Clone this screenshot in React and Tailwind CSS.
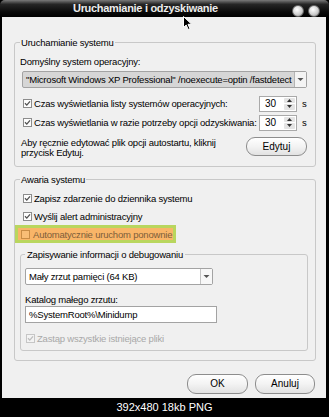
import React from "react";

function Check({ checked = true, disabled = false }) {
  return (
    <svg width="9" height="9" viewBox="0 0 9 9" className="shrink-0">
      <rect
        x="0.5"
        y="0.5"
        width="8"
        height="8"
        fill={disabled ? "#f3f3f3" : "#fdfdfd"}
        stroke={disabled ? "#c6c6c6" : "#8c8c8c"}
      />
      {checked && (
        <path
          d="M2 4.3 L3.8 6.1 L7 2.3"
          fill="none"
          stroke={disabled ? "#bdbdbd" : "#505050"}
          strokeWidth="1.3"
        />
      )}
    </svg>
  );
}

function Arrow() {
  return (
    <svg width="7" height="5" viewBox="0 0 7 5">
      <path d="M0.5 1 L6.5 1 L3.5 4 Z" fill="#555" />
    </svg>
  );
}

function Spin() {
  return (
    <div className="flex h-[16px] w-[38px] border border-[#a9a9a9] bg-white">
      <span className="flex-1 pl-[5px] text-[10px] leading-[14px] tracking-normal">30</span>
      <div className="flex w-[13px] flex-col gap-[1px] p-[1px]">
        <div className="flex flex-1 items-center justify-center rounded-[1px] bg-[#e4e4e4]">
          <svg width="5" height="3" viewBox="0 0 5 3">
            <path d="M0 3 L5 3 L2.5 0 Z" fill="#333" />
          </svg>
        </div>
        <div className="flex flex-1 items-center justify-center rounded-[1px] bg-[#e4e4e4]">
          <svg width="5" height="3" viewBox="0 0 5 3">
            <path d="M0 0 L5 0 L2.5 3 Z" fill="#333" />
          </svg>
        </div>
      </div>
    </div>
  );
}

function Button({ children, className = "" }) {
  return (
    <div
      className={`flex items-center justify-center rounded-[9px] border border-[#8d8d8d] bg-[linear-gradient(#ffffff,#f3f3f3_50%,#e2e2e2)] text-[10px] tracking-normal ${className}`}
    >
      {children}
    </div>
  );
}

function CheckRow({ children, disabled = false }) {
  return (
    <div className="flex h-[18px] items-center gap-[2px] pl-[3px]">
      <Check disabled={disabled} />
      <span className={disabled ? "text-[#a8a8a8]" : ""}>{children}</span>
    </div>
  );
}

export default function App() {
  return (
    <div className="relative flex h-[417px] w-[329px] flex-col overflow-hidden bg-black font-['Liberation_Sans',Arial,sans-serif] text-[9.5px] leading-[11px] tracking-[-0.2px] text-black">
      {/* title bar */}
      <div className="flex h-[17px] shrink-0 items-start rounded-t-[5px] bg-[linear-gradient(#7a7a7a,#262626_25%,#0a0a0a_70%,#000)]">
        <div className="flex-1 pl-[73px] pt-[2px] text-[11px] font-bold leading-[13px] tracking-[-0.3px] text-[#ececec]">
          Uruchamianie i odzyskiwanie
        </div>
        <div className="mr-[9px] mt-[5px] flex gap-[4px]">
          <div className="h-[12px] w-[12px] rounded-full border border-[#666] bg-[radial-gradient(circle_at_40%_35%,#ffffff,#cfcfcf_55%,#8a8a8a)]" />
          <div className="h-[12px] w-[12px] rounded-full border border-[#666] bg-[radial-gradient(circle_at_40%_35%,#ffffff,#cfcfcf_55%,#8a8a8a)]" />
        </div>
      </div>

      {/* window body */}
      <div className="ml-[2px] mr-[3px] flex h-[381px] flex-col bg-[#f0f0f0] pl-[12px] pr-[10px] pt-[20px]">
        <fieldset className="rounded-[3px] border border-[#c8c8c8] pb-[8px] pl-[5px] pr-[7px]">
          <legend className="px-[1px] leading-[11px]">Uruchamianie systemu</legend>
          <div className="pt-[8px]">Domyślny system operacyjny:</div>
          <div className="ml-[2px] mr-[1px] mt-[3.5px] flex h-[17px] items-center rounded-[2px] border border-[#a3a3a3] bg-[#d6d6d6]">
            <span className="flex-1 overflow-hidden whitespace-nowrap pl-[3px]">
              "Microsoft Windows XP Professional" /noexecute=optin /fastdetect
            </span>
            <div className="flex h-full w-[12px] items-center justify-center border-l border-[#b5b5b5] bg-[#f4f4f4]">
              <Arrow />
            </div>
          </div>
          <div className="mt-[8px] flex h-[16px] items-center">
            <div className="flex flex-1 items-center gap-[2px] pl-[3px]">
              <Check />
              <span>Czas wyświetlania listy systemów operacyjnych:</span>
            </div>
            <Spin />
            <span className="w-[11px] pl-[5px]">s</span>
          </div>
          <div className="mt-[3px] flex h-[16px] items-center">
            <div className="flex flex-1 items-center gap-[2px] pl-[3px]">
              <Check />
              <span>Czas wyświetlania w razie potrzeby opcji odzyskiwania:</span>
            </div>
            <Spin />
            <span className="w-[11px] pl-[5px]">s</span>
          </div>
          <div className="mt-[6px] flex items-start">
            <div className="mt-[1px] flex-1 pl-[1px] leading-[10px]">
              Aby ręcznie edytować plik opcji autostartu, kliknij
              <br />
              przycisk Edytuj.
            </div>
            <Button className="mr-[1px] h-[19px] w-[61px]">Edytuj</Button>
          </div>
        </fieldset>

        <fieldset className="mt-[7.5px] rounded-[3px] border border-[#c8c8c8] pb-[9px] pl-[5px] pr-[7px]">
          <legend className="px-[1px] leading-[11px]">Awaria systemu</legend>
          <div className="pt-[4px]">
            <CheckRow>Zapisz zdarzenie do dziennika systemu</CheckRow>
            <CheckRow>Wyślij alert administracyjny</CheckRow>
            <div className="-ml-[5px] flex h-[18px] w-[161px] items-center gap-[3px] whitespace-nowrap border-[3px] border-[#b9d65e] bg-[#f9b568] pl-[3px]">
              <svg width="9" height="9" viewBox="0 0 9 9" className="shrink-0">
                <rect x="0.5" y="0.5" width="8" height="8" fill="#f9bd76" stroke="#c98c45" />
              </svg>
              <span className="text-[#7d5e3a]">Automatycznie uruchom ponownie</span>
            </div>
          </div>

          <fieldset className="mt-[5.5px] rounded-[3px] border border-[#c8c8c8] pb-[5px] pl-[4px] pr-[6px]">
            <legend className="px-[2px] leading-[11px]">Zapisywanie informacji o debugowaniu</legend>
            <div className="mt-[8.5px] flex h-[17px] w-[188px] items-center rounded-[2px] border border-[#a3a3a3] bg-white">
              <span className="flex-1 pl-[3px]">Mały zrzut pamięci (64 KB)</span>
              <div className="flex h-full w-[12px] items-center justify-center border-l border-[#c4c4c4] bg-[#f7f7f7]">
                <Arrow />
              </div>
            </div>
            <div className="mt-[9px]">Katalog małego zrzutu:</div>
            <div className="mt-[0.5px] flex h-[17px] w-[192px] items-center border border-[#a3a3a3] bg-white pl-[3px]">
              %SystemRoot%\Minidump
            </div>
            <div className="mt-[10px] flex h-[12px] items-center gap-[2px] pl-[1px]">
              <Check disabled />
              <span className="text-[#a8a8a8]">Zastąp wszystkie istniejące pliki</span>
            </div>
          </fieldset>
        </fieldset>

        <div className="mt-[13px] flex justify-end gap-[7px] pr-[1px]">
          <Button className="h-[20px] w-[61px]">OK</Button>
          <Button className="h-[20px] w-[60px]">Anuluj</Button>
        </div>
      </div>

      {/* caption strip */}
      <div className="flex flex-1 items-center justify-center text-[11px] tracking-normal text-white">
        392x480 18kb PNG
      </div>

      {/* mouse pointer over the title */}
      <svg
        className="absolute left-[183px] top-[16px]"
        width="11"
        height="15"
        viewBox="0 0 11 15"
      >
        <path
          d="M0.5 0.5 L0.5 11.5 L3.2 9 L5.2 13.5 L7 12.7 L5 8.3 L8.7 8.3 Z"
          fill="#000"
          stroke="#fff"
          strokeWidth="1"
        />
      </svg>
    </div>
  );
}
